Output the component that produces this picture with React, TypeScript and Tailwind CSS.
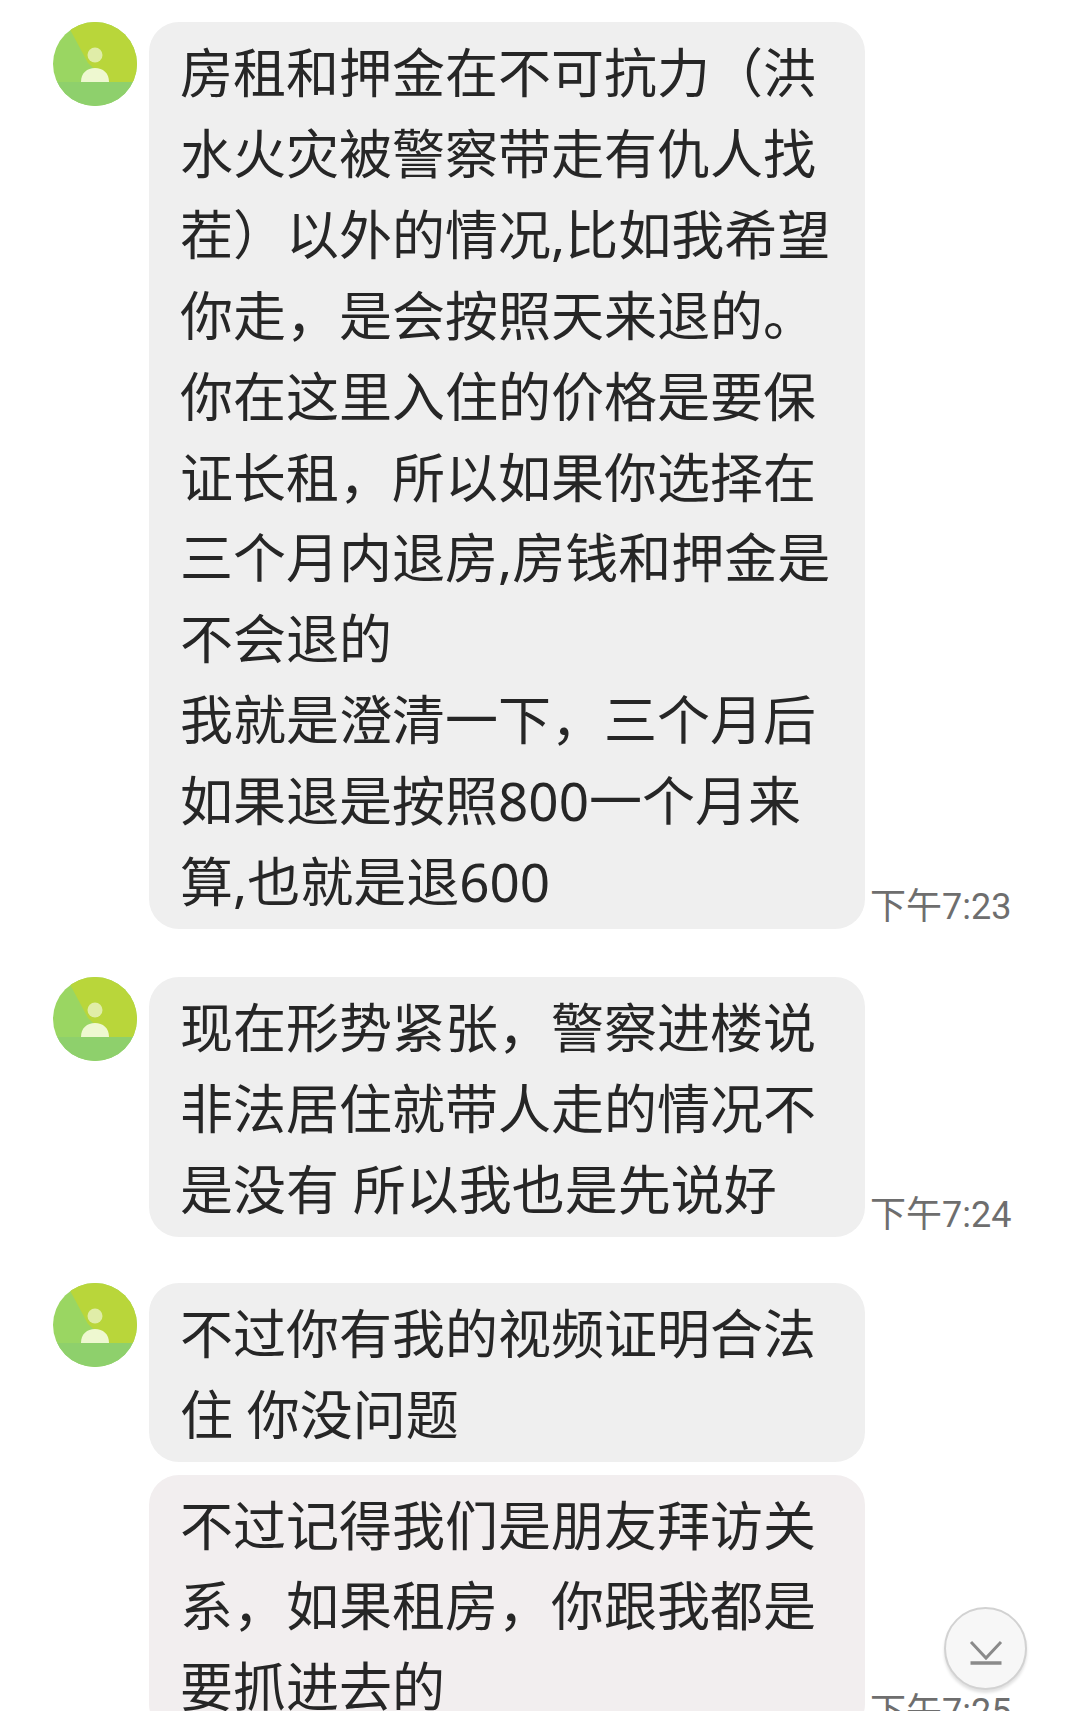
import React from 'react';

type Group = { lines: string[]; time?: string; avatar?: boolean; tint?: boolean };

const GROUPS: Group[] = [
  {
    avatar: true,
    time: '下午7:23',
    lines: [
      '房租和押金在不可抗力（洪',
      '水火灾被警察带走有仇人找',
      '茬）以外的情况,比如我希望',
      '你走，是会按照天来退的。',
      '你在这里入住的价格是要保',
      '证长租，所以如果你选择在',
      '三个月内退房,房钱和押金是',
      '不会退的',
      '我就是澄清一下，三个月后',
      '如果退是按照800一个月来',
      '算,也就是退600',
    ],
  },
  {
    avatar: true,
    time: '下午7:24',
    lines: ['现在形势紧张，警察进楼说', '非法居住就带人走的情况不', '是没有 所以我也是先说好'],
  },
  {
    avatar: true,
    lines: ['不过你有我的视频证明合法', '住 你没问题'],
  },
  {
    tint: true,
    time: '下午7:25',
    lines: ['不过记得我们是朋友拜访关', '系，如果租房，你跟我都是', '要抓进去的'],
  },
];

const Avatar = () => (
  <svg viewBox="0 0 84 84" className="w-[84px] h-[84px] block">
    <circle cx="42" cy="42" r="42" fill="#9ad662" />
    <clipPath id="avatar-clip">
      <circle cx="42" cy="42" r="42" />
    </clipPath>
    <g clipPath="url(#avatar-clip)">
      <polygon points="13,0 84,0 84,60 55,60 35,41" fill="#b9d63a" />
      <polygon points="0,60 84,60 84,84 0,84" fill="#8ed06c" />
    </g>
    <circle cx="42" cy="33" r="7.5" fill="#e0eda8" />
    <path d="M28 60c0-9 6-14 14-14s14 5 14 14z" fill="#eef8d0" />
  </svg>
);

const Row = ({ group }: { group: Group }) => (
  <div className="flex items-start">
    <div className="w-[84px] shrink-0 mr-3">{group.avatar && <Avatar />}</div>
    <div
      className={`w-[716px] shrink-0 rounded-[30px] pl-[31px] pt-[11px] pb-[6px] ${group.tint ? 'bg-[#f2eeef]' : 'bg-[#efefef]'}`}
    >
      {group.lines.map((line, idx) => (
        <div key={idx} className="text-[53px] leading-[80.9px] text-[#262626] whitespace-nowrap">
          {line}
        </div>
      ))}
    </div>
    {group.time && (
      <div className="self-end ml-[5px] text-[36px] leading-[44px] text-[#6e6e6e] whitespace-nowrap font-['Roboto','Noto_Sans_CJK_SC',sans-serif]">
        {group.time}
      </div>
    )}
  </div>
);

export default function App() {
  return (
    <div className="relative w-[1080px] h-[1727px] bg-white overflow-hidden font-['Noto_Sans','Noto_Sans_CJK_SC',sans-serif]">
      <div className="h-[1711px] overflow-hidden pt-[22px] pl-[53px] flex flex-col">
        <Row group={GROUPS[0]} />
        <div className="mt-[48px]">
          <Row group={GROUPS[1]} />
        </div>
        <div className="mt-[46px]">
          <Row group={GROUPS[2]} />
        </div>
        <div className="mt-[13px]">
          <Row group={GROUPS[3]} />
        </div>
      </div>

      {/* scroll to bottom button */}
      <div className="absolute left-[944px] top-[1607px] w-[83px] h-[83px] rounded-full bg-[#f7f7f7] border-2 border-[#d2d2d2] shadow-[0_3px_3px_rgba(0,0,0,0.12)] flex items-center justify-center">
        <svg viewBox="0 0 36 36" className="w-[36px] h-[36px]" fill="none" stroke="#8a8a8a">
          <path d="M3 11l15 16L33 11" strokeWidth="3" />
          <path d="M2.5 32h31" strokeWidth="3.5" />
        </svg>
      </div>
    </div>
  );
}
